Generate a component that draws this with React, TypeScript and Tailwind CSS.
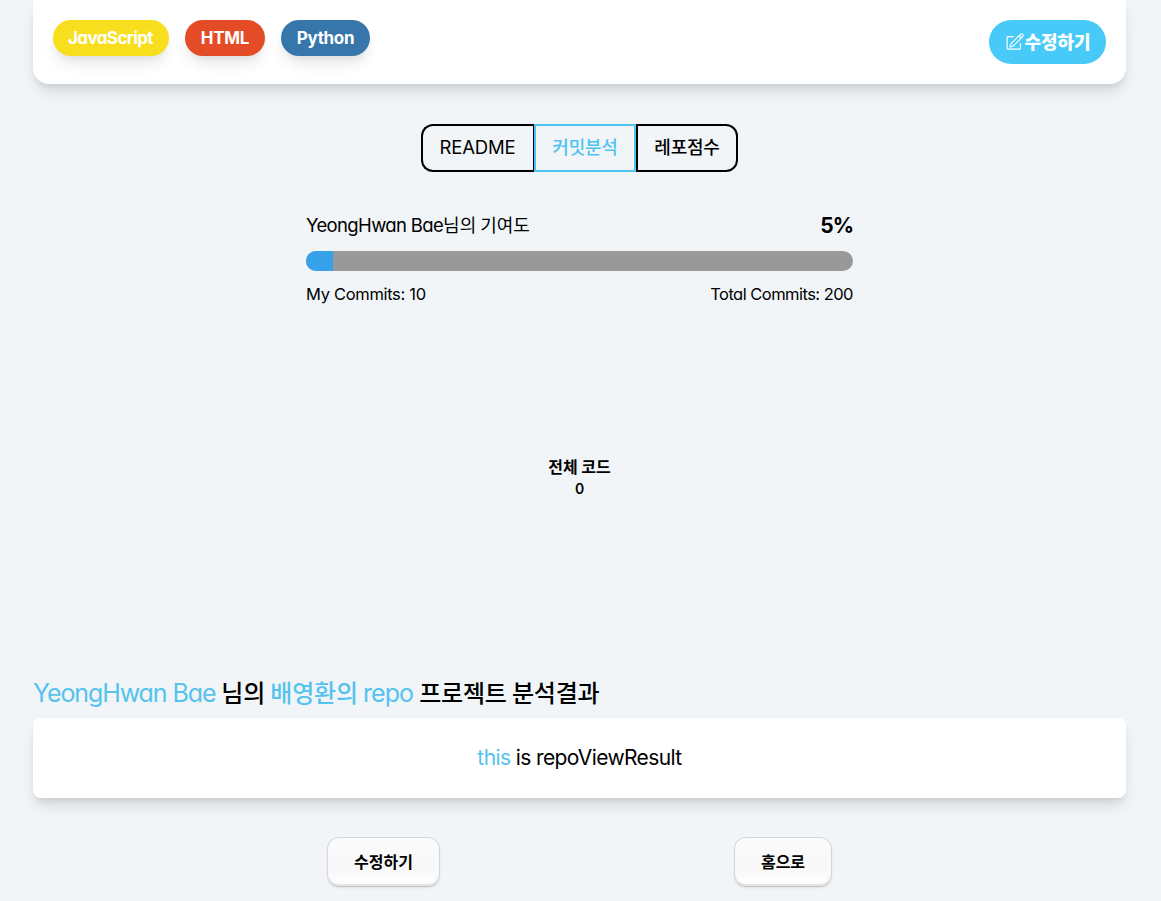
import type { ReactNode } from "react";

const SHADOW = "shadow-[0_10px_15px_-3px_rgba(0,0,0,0.1),0_4px_6px_-2px_rgba(0,0,0,0.05)]";

function Ko({ className = "", children }: { className?: string; children: ReactNode }) {
  return <span className={`inline-block -translate-y-px font-['Noto_Sans_CJK_KR',sans-serif] ${className}`}>{children}</span>;
}

function Tag({ className, children }: { className: string; children: ReactNode }) {
  return (
    <span className={`flex h-9 items-center justify-center rounded-full pt-0.5 text-[17px] font-bold whitespace-nowrap text-white ${SHADOW} ${className}`}>
      {children}
    </span>
  );
}

function EditIcon() {
  return (
    <svg viewBox="0 0 24 24" className="size-5 shrink-0 translate-x-px" fill="none" stroke="currentColor" strokeWidth="1.4" strokeLinecap="round" strokeLinejoin="round">
      <path d="m16.862 4.487 1.687-1.688a1.875 1.875 0 1 1 2.652 2.652L10.582 16.07a4.5 4.5 0 0 1-1.897 1.13L6 18l.8-2.685a4.5 4.5 0 0 1 1.13-1.897l8.932-8.931Zm0 0L19.5 7.125M18.5 14v5.5a1 1 0 0 1-1 1h-14a1 1 0 0 1-1-1v-13a1 1 0 0 1 1-1H10" />
    </svg>
  );
}

function FooterButton({ className, children }: { className: string; children: ReactNode }) {
  return (
    <button
      className={`h-[50px] rounded-[12px] border border-[#d5d7d9] border-b-[#c4c6c8] bg-linear-to-b from-[#fbfbfb] from-0% via-[#f8f8f8] via-60% to-white text-base font-bold shadow-[inset_0_-2px_1px_#e4e4e4,0_1px_2px_rgba(0,0,0,0.08)] ${className}`}
    >
      {children}
    </button>
  );
}

export default function App() {
  const mine = 10;
  const total = 200;
  const percent = (mine / total) * 100;
  return (
    <div className="flex h-[901px] flex-col overflow-hidden bg-[#f1f5f8] pr-[35px] pl-[33px] font-[Inter,'Noto_Sans_CJK_KR',sans-serif] text-black [font-feature-settings:'cv11']">
      <section className="flex h-[84px] shrink-0 items-start justify-between rounded-b-[16px] bg-white px-5 pt-5 shadow-[0_10px_15px_-3px_rgba(0,0,0,0.12),0_4px_6px_-2px_rgba(0,0,0,0.08)]">
        <div className="flex gap-4">
          <Tag className="w-[116px] bg-[#f7df1e] pr-px tracking-[-0.6px]">JavaScript</Tag>
          <Tag className="w-20 bg-[#e34c26] tracking-[-0.3px]">HTML</Tag>
          <Tag className="w-[89px] bg-[#3776ab] tracking-[-0.35px]">Python</Tag>
        </div>
        <button className="flex h-11 w-[117px] items-center justify-center rounded-full bg-[#48caf8] text-white">
          <EditIcon />
          <Ko className="text-lg leading-none font-black">수정하기</Ko>
        </button>
      </section>

      <nav className="mt-10 flex h-12 shrink-0 justify-center text-lg">
        <button className="w-[113px] rounded-l-[12px] border-2 border-r-0 border-black pr-0.5 pb-0.5 text-[18.5px] tracking-[-0.2px]">README</button>
        <button className="w-[102px] border-2 border-[#4fc3f1] text-[#4fc3f1] shadow-[-1px_0_0_#000]"><Ko className="font-medium tracking-[-0.2px]">커밋분석</Ko></button>
        <button className="w-[102px] rounded-r-[12px] border-2 border-black"><Ko className="font-medium tracking-[-0.2px]">레포점수</Ko></button>
      </nav>

      <section className="mx-auto mt-10 flex w-[547px] shrink-0 flex-col">
        <div className="flex h-7 items-center justify-between">
          <span className="flex -translate-y-px items-center text-lg whitespace-nowrap">
            <span className="text-[18.5px] tracking-[-0.65px]">YeongHwan Bae</span>
            <Ko>님의 기여도</Ko>
          </span>
          <span className="text-[21px] font-bold tracking-[-1px]">{percent}%</span>
        </div>
        <div className="mt-[11px] h-5 overflow-hidden rounded-full bg-[#999]">
          <div className="h-full bg-[#36a2eb]" style={{ width: `${percent}%` }} />
        </div>
        <div className="mt-[11px] flex h-6 items-center justify-between text-[16.5px]">
          <span className="tracking-[-0.32px]">My Commits: {mine}</span>
          <span className="tracking-[-0.53px]">Total Commits: {total}</span>
        </div>
      </section>

      <section className="flex h-[370px] shrink-0 flex-col items-center pt-[150px] text-base">
        <Ko className="text-base leading-[22px] font-bold">전체 코드</Ko>
        <span className="text-sm leading-[22px] font-semibold">0</span>
      </section>

      <h2 className="flex h-9 shrink-0 items-center text-2xl whitespace-pre">
        <span className="text-[25px] tracking-[-1.1px] text-[#56c2ee]">YeongHwan Bae </span>
        <Ko className="pb-0.5 font-medium tracking-[-0.2px]">님의 </Ko>
        <Ko className="pb-0.5 font-medium tracking-[-0.2px] text-[#56c2ee]">배영환의 </Ko>
        <span className="text-[25px] tracking-[-0.95px] text-[#56c2ee]">repo </span>
        <Ko className="pb-0.5 font-medium tracking-[-0.2px]">프로젝트 분석결과</Ko>
      </h2>
      <section className="mt-[6px] flex h-20 shrink-0 items-center justify-center rounded-lg bg-white text-[21px] tracking-[-0.6px] whitespace-pre shadow-[0_10px_15px_-3px_rgba(0,0,0,0.12),0_4px_6px_-2px_rgba(0,0,0,0.08)]">
        <span className="text-[#56c2ee]">this</span>
        <span> is repoViewResult</span>
      </section>

      <div className="mt-[39px] flex shrink-0 justify-between px-[294px]">
        <FooterButton className="w-[113px]"><Ko>수정하기</Ko></FooterButton>
        <FooterButton className="w-[98px]"><Ko>홈으로</Ko></FooterButton>
      </div>
    </div>
  );
}
